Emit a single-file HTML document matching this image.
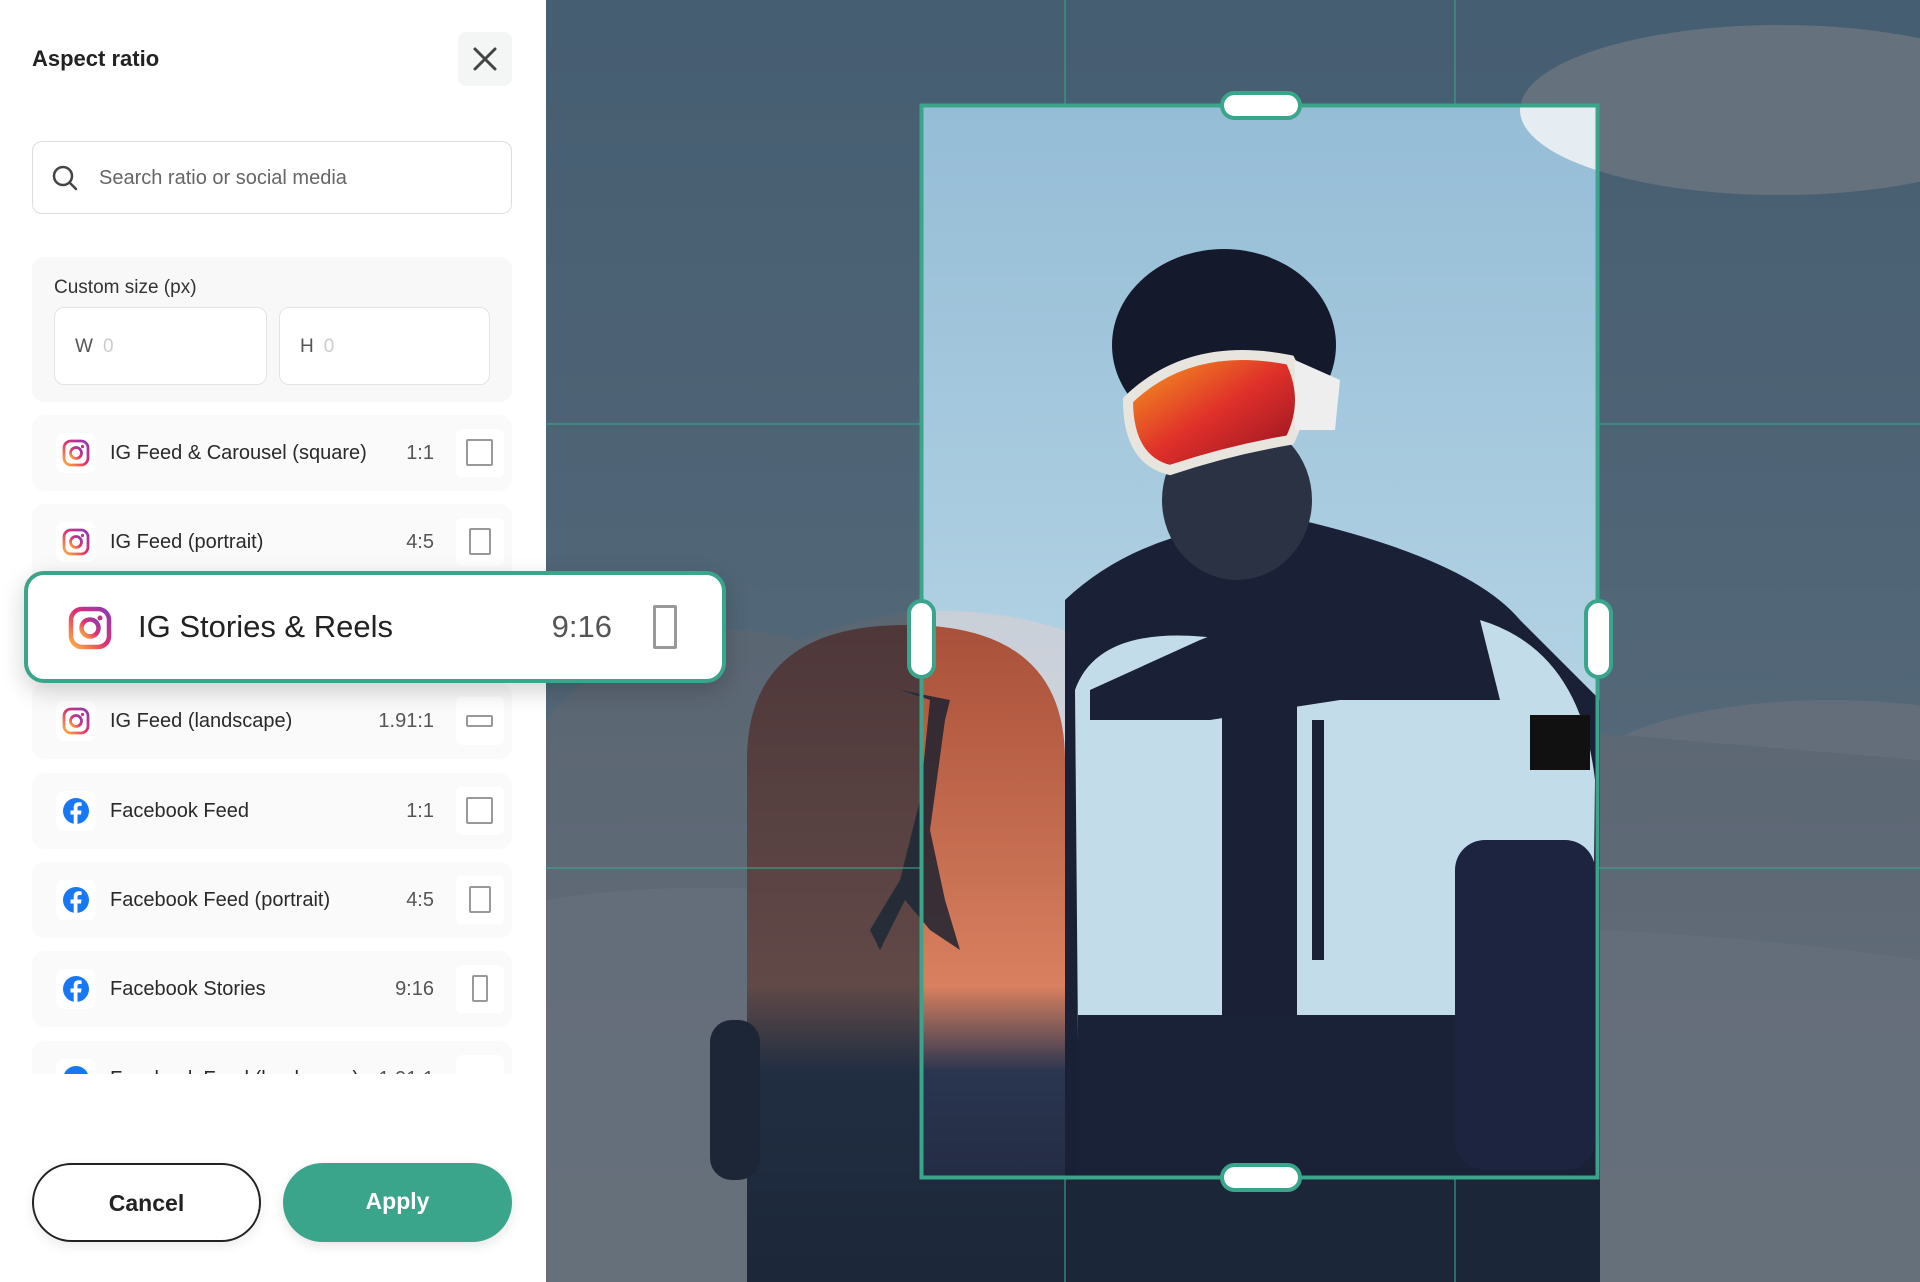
<!DOCTYPE html>
<html><head><meta charset="utf-8"><style>
*{box-sizing:border-box;margin:0;padding:0}
body{width:1920px;height:1282px;position:relative;overflow:hidden;font-family:"Liberation Sans",sans-serif;background:#fff}
.panel{position:absolute;left:0;top:0;width:546px;height:1282px;background:#fff}
.abs{position:absolute}
.title{left:32px;top:46px;font-size:22px;font-weight:bold;color:#222}
.close{left:458px;top:32px;width:54px;height:54px;background:#f4f5f5;border-radius:8px}
.search{left:32px;top:141px;width:480px;height:73px;border:1.5px solid #dedede;border-radius:10px}
.search span{position:absolute;left:66px;top:25px;font-size:20px;color:#666}
.custom{left:32px;top:257px;width:480px;height:145px;background:#f8f8f8;border-radius:12px}
.custom .lbl{position:absolute;left:22px;top:20px;font-size:19px;color:#333}
.inp{position:absolute;top:50px;height:78px;background:#fff;border:1.5px solid #e3e3e3;border-radius:10px;font-size:19px;color:#555;padding:28px 0 0 20px}
.inp i{font-style:normal;color:#ccc;margin-left:10px}
.list{left:32px;top:403px;width:480px;height:671px;overflow:hidden}
.row{position:absolute;left:0;width:480px;height:76px;background:#fafafa;border-radius:12px}
.row .ic{position:absolute;left:24px;top:18px;width:40px;height:40px;background:#fff;border-radius:8px}
.row .ic svg{position:absolute;left:6px;top:6px}
.row .t{position:absolute;left:78px;top:27px;font-size:20px;color:#2a2a2a}
.row .r{position:absolute;right:78px;top:27px;font-size:20px;color:#555}
.row .sb{position:absolute;right:8px;top:14px;width:48px;height:48px;background:#fff;border-radius:6px}
.row .sh{position:absolute;border:2.5px solid #999;border-radius:2px}
.card{left:24px;top:571px;width:702px;height:112px;background:#fff;border:4px solid #3aa58b;border-radius:20px;box-shadow:0 8px 24px rgba(0,0,0,.18);z-index:5}
.btn{top:1163px;width:229px;height:79px;border-radius:40px;font-size:23px;font-weight:bold;text-align:center;line-height:77px}
.scene{position:absolute;left:546px;top:0;width:1374px;height:1282px}
</style></head><body>
<svg class="scene" viewBox="546 0 1374 1282" width="1374" height="1282">
<defs>
<linearGradient id="sky" x1="0" y1="0" x2="0" y2="1"><stop offset="0" stop-color="#8fb9d3"/><stop offset=".6" stop-color="#b7d5e6"/><stop offset="1" stop-color="#d2e3ee"/></linearGradient>
<linearGradient id="snow" x1="0" y1="0" x2="0" y2="1"><stop offset="0" stop-color="#c9cfd8"/><stop offset="1" stop-color="#e4e6ec"/></linearGradient>
<linearGradient id="board" x1="0" y1="0" x2="0" y2="1"><stop offset="0" stop-color="#a9503a"/><stop offset=".55" stop-color="#d8805f"/><stop offset=".68" stop-color="#2a3550"/><stop offset="1" stop-color="#1d2438"/></linearGradient>
<linearGradient id="gog" x1="0" y1="0" x2="1" y2="1"><stop offset="0" stop-color="#f7a21d"/><stop offset=".5" stop-color="#e0302a"/><stop offset="1" stop-color="#8a1020"/></linearGradient>
</defs>
<rect x="546" y="0" width="1374" height="1282" fill="url(#sky)"/>
<ellipse cx="1780" cy="110" rx="260" ry="85" fill="#e6edf2"/>
<ellipse cx="1830" cy="790" rx="260" ry="90" fill="#dfe6ec"/>
<path d="M546 720 Q650 600 800 640 Q1000 560 1200 700 L1920 760 L1920 1282 L546 1282Z" fill="url(#snow)"/>
<path d="M546 900 Q800 860 1100 950 Q1500 900 1920 960 L1920 1282 L546 1282Z" fill="#eceef2" opacity=".6"/>
<path d="M747 760 Q747 625 906 625 Q1065 625 1065 760 L1065 1282 L747 1282Z" fill="url(#board)"/>
<path d="M900 690 L930 700 L920 800 L900 880 L870 930 L880 950 L905 900 L930 930 L960 950 L945 900 L930 830 L945 720 L950 700Z" fill="#1e2230" opacity=".85"/>
<rect x="710" y="1020" width="50" height="160" rx="22" fill="#1c2030"/>
<path d="M1065 600 Q1150 520 1300 520 Q1470 560 1520 620 L1600 700 L1600 1282 L1065 1282Z" fill="#1a2036"/>
<path d="M1075 690 Q1100 620 1230 640 L1480 620 Q1580 650 1595 780 L1592 1040 L1078 1040Z" fill="#c3dcea"/>
<path d="M1090 690 L1200 640 L1330 590 L1480 620 L1500 700 L1340 700 L1210 720 L1090 720Z" fill="#1a2036"/>
<rect x="1222" y="660" width="75" height="622" fill="#1a2036"/>
<rect x="1312" y="720" width="12" height="240" fill="#1a2036"/>
<rect x="1078" y="1015" width="514" height="267" fill="#1a2238"/>
<rect x="1455" y="840" width="140" height="330" rx="30" fill="#1c2440"/>
<rect x="1530" y="715" width="60" height="55" fill="#111"/>
<ellipse cx="1237" cy="500" rx="75" ry="80" fill="#2a3244"/>
<ellipse cx="1224" cy="345" rx="112" ry="96" fill="#141a2c"/>
<path d="M1128 400 Q1190 340 1290 360 Q1310 400 1290 440 Q1230 450 1170 470 Q1128 460 1128 400Z" fill="url(#gog)" stroke="#e8e4de" stroke-width="10"/>
<path d="M1295 360 L1340 380 L1335 430 L1295 430Z" fill="#eeeeee"/>
<path fill-rule="evenodd" d="M546 0H1920V1282H546Z M921 105V1177H1597V105Z" fill="#1c2a3a" opacity=".64"/>
<g stroke="#3aa58b" stroke-width="2" opacity=".55">
<line x1="1065" y1="0" x2="1065" y2="105"/><line x1="1065" y1="1177" x2="1065" y2="1282"/>
<line x1="1455" y1="0" x2="1455" y2="105"/><line x1="1455" y1="1177" x2="1455" y2="1282"/>
<line x1="546" y1="424" x2="921" y2="424"/><line x1="1597" y1="424" x2="1920" y2="424"/>
<line x1="546" y1="868" x2="921" y2="868"/><line x1="1597" y1="868" x2="1920" y2="868"/>
</g>
<rect x="921.5" y="105.5" width="676" height="1072" fill="none" stroke="#3aa58b" stroke-width="4"/>
<g fill="#fff" stroke="#3aa58b" stroke-width="4">
<rect x="1222" y="93" width="78" height="25" rx="12.5"/>
<rect x="1222" y="1165" width="78" height="25" rx="12.5"/>
<rect x="909" y="601" width="25" height="76" rx="12.5"/>
<rect x="1586" y="601" width="25" height="76" rx="12.5"/>
</g>
</svg>

<div class="panel">
<div class="abs title">Aspect ratio</div>
<div class="abs close"><svg width="54" height="54"><path d="M17 17L37 37M37 17L17 37" stroke="#444" stroke-width="3" stroke-linecap="round"/></svg></div>
<div class="abs search"><svg class="abs" style="left:18px;top:22px" width="28" height="28"><circle cx="12" cy="12" r="9" fill="none" stroke="#444" stroke-width="2.5"/><path d="M19 19L25 25" stroke="#444" stroke-width="2.5" stroke-linecap="round"/></svg><span>Search ratio or social media</span></div>
<div class="abs custom"><div class="lbl">Custom size (px)</div>
<div class="inp" style="left:22px;width:213px">W<i>0</i></div>
<div class="inp" style="left:247px;width:211px">H<i>0</i></div></div>

<div class="abs list">
<div class="row" style="top:12px"><div class="ic"><svg width="28" height="28"><defs><linearGradient id="ig" x1="0" y1="1" x2="1" y2="0"><stop offset="0" stop-color="#fdb43f"/><stop offset=".5" stop-color="#e1306c"/><stop offset="1" stop-color="#8a3ab9"/></linearGradient></defs><rect x="2" y="2" width="24" height="24" rx="7" fill="none" stroke="url(#ig)" stroke-width="2.8"/><circle cx="14" cy="14" r="5.5" fill="none" stroke="url(#ig)" stroke-width="2.8"/><circle cx="20.5" cy="7.5" r="1.6" fill="#c13584"/></svg></div><div class="t">IG Feed &amp; Carousel (square)</div><div class="r">1:1</div><div class="sb"><div class="sh" style="left:10px;top:10px;width:27px;height:27px"></div></div></div>
<div class="row" style="top:101px"><div class="ic"><svg width="28" height="28"><rect x="2" y="2" width="24" height="24" rx="7" fill="none" stroke="url(#ig)" stroke-width="2.8"/><circle cx="14" cy="14" r="5.5" fill="none" stroke="url(#ig)" stroke-width="2.8"/><circle cx="20.5" cy="7.5" r="1.6" fill="#c13584"/></svg></div><div class="t">IG Feed (portrait)</div><div class="r">4:5</div><div class="sb"><div class="sh" style="left:13px;top:10px;width:22px;height:27px"></div></div></div>
<div class="row" style="top:280px"><div class="ic"><svg width="28" height="28"><rect x="2" y="2" width="24" height="24" rx="7" fill="none" stroke="url(#ig)" stroke-width="2.8"/><circle cx="14" cy="14" r="5.5" fill="none" stroke="url(#ig)" stroke-width="2.8"/><circle cx="20.5" cy="7.5" r="1.6" fill="#c13584"/></svg></div><div class="t">IG Feed (landscape)</div><div class="r">1.91:1</div><div class="sb"><div class="sh" style="left:10px;top:18px;width:27px;height:12px"></div></div></div>
<div class="row" style="top:370px"><div class="ic"><svg width="28" height="28"><circle cx="14" cy="14" r="13" fill="#1877f2"/><path d="M15.5 27V17.5H19L19.5 13.5H15.5V11C15.5 9.8 16 9 17.6 9H19.6V5.5C19 5.4 17.8 5.3 16.6 5.3C13.7 5.3 11.7 7 11.7 10.3V13.5H8.5V17.5H11.7V27Z" fill="#fff"/></svg></div><div class="t">Facebook Feed</div><div class="r">1:1</div><div class="sb"><div class="sh" style="left:10px;top:10px;width:27px;height:27px"></div></div></div>
<div class="row" style="top:459px"><div class="ic"><svg width="28" height="28"><circle cx="14" cy="14" r="13" fill="#1877f2"/><path d="M15.5 27V17.5H19L19.5 13.5H15.5V11C15.5 9.8 16 9 17.6 9H19.6V5.5C19 5.4 17.8 5.3 16.6 5.3C13.7 5.3 11.7 7 11.7 10.3V13.5H8.5V17.5H11.7V27Z" fill="#fff"/></svg></div><div class="t">Facebook Feed (portrait)</div><div class="r">4:5</div><div class="sb"><div class="sh" style="left:13px;top:10px;width:22px;height:27px"></div></div></div>
<div class="row" style="top:548px"><div class="ic"><svg width="28" height="28"><circle cx="14" cy="14" r="13" fill="#1877f2"/><path d="M15.5 27V17.5H19L19.5 13.5H15.5V11C15.5 9.8 16 9 17.6 9H19.6V5.5C19 5.4 17.8 5.3 16.6 5.3C13.7 5.3 11.7 7 11.7 10.3V13.5H8.5V17.5H11.7V27Z" fill="#fff"/></svg></div><div class="t">Facebook Stories</div><div class="r">9:16</div><div class="sb"><div class="sh" style="left:16px;top:10px;width:16px;height:27px"></div></div></div>
<div class="row" style="top:638px"><div class="ic"><svg width="28" height="28"><circle cx="14" cy="14" r="13" fill="#1877f2"/></svg></div><div class="t">Facebook Feed (landscape)</div><div class="r">1.91:1</div><div class="sb"></div></div>
</div>

<div class="abs btn" style="left:32px;border:2px solid #222;color:#222;background:#fff;box-shadow:0 4px 12px rgba(0,0,0,.08)">Cancel</div>
<div class="abs btn" style="left:283px;background:#3aa58b;color:#fff;box-shadow:0 4px 12px rgba(0,0,0,.1)">Apply</div>
</div>

<div class="abs card">
<svg class="abs" style="left:40px;top:31px" width="44" height="44"><defs><linearGradient id="ig2" x1="0" y1="1" x2="1" y2="0"><stop offset="0" stop-color="#fdb43f"/><stop offset=".5" stop-color="#e1306c"/><stop offset="1" stop-color="#8a3ab9"/></linearGradient></defs><rect x="3" y="3" width="38" height="38" rx="11" fill="none" stroke="url(#ig2)" stroke-width="4.5"/><circle cx="22" cy="22" r="8.5" fill="none" stroke="url(#ig2)" stroke-width="4.5"/><circle cx="32" cy="12" r="2.5" fill="#c13584"/></svg>
<div class="abs" style="left:110px;top:34px;font-size:31px;color:#222">IG Stories &amp; Reels</div>
<div class="abs" style="right:110px;top:34px;font-size:31px;color:#555">9:16</div>
<div class="abs" style="left:625px;top:30px;width:24px;height:44px;border:3px solid #999;border-radius:2px"></div>
</div>
</body></html>
